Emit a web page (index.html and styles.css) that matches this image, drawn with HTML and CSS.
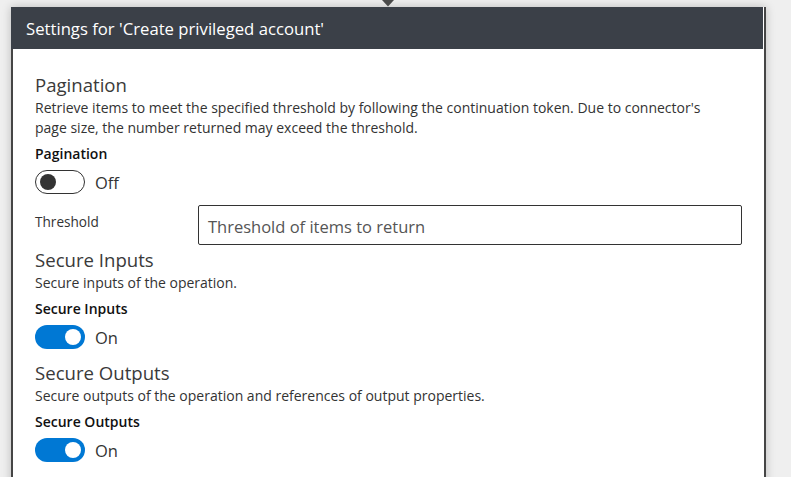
FILE: index.html
```html
<!DOCTYPE html>
<html>
<head>
<meta charset="utf-8">
<link rel="stylesheet" href="styles.css">
</head>
<body>
<div class="stage">
  <svg class="connector" width="14" height="8" viewBox="0 0 14 8"><path d="M1 0 L7 6.5 L13 0 Z" fill="#4a4a4a"/></svg>
  <div class="panel">
    <div class="header">Settings for 'Create privileged account'</div>
    <div class="content">
      <section class="section">
        <h2 class="heading">Pagination</h2>
        <p class="desc">Retrieve items to meet the specified threshold by following the continuation token. Due to connector's page size, the number returned may exceed the threshold.</p>
        <div class="label">Pagination</div>
        <div class="toggle-row">
          <span class="toggle off"><span class="knob"></span></span>
          <span class="state">Off</span>
        </div>
        <div class="field-row">
          <span class="field-label">Threshold</span>
          <div class="input">Threshold of items to return</div>
        </div>
      </section>
      <section class="section after-field">
        <h2 class="heading">Secure Inputs</h2>
        <p class="desc">Secure inputs of the operation.</p>
        <div class="label">Secure Inputs</div>
        <div class="toggle-row">
          <span class="toggle on"><span class="knob"></span></span>
          <span class="state">On</span>
        </div>
      </section>
      <section class="section after-toggle">
        <h2 class="heading">Secure Outputs</h2>
        <p class="desc">Secure outputs of the operation and references of output properties.</p>
        <div class="label">Secure Outputs</div>
        <div class="toggle-row">
          <span class="toggle on"><span class="knob"></span></span>
          <span class="state">On</span>
        </div>
      </section>
    </div>
  </div>
</div>
</body>
</html>
```
FILE: styles.css
```css
html, body {
  margin: 0;
  padding: 0;
  height: 100%;
  overflow: hidden;
  background: #efefef;
  font-family: "Open Sans", "Noto Sans", sans-serif;
}
.stage {
  position: relative;
  padding: 7px 0 0 11px;
  height: 100%;
  box-sizing: border-box;
}
.connector {
  position: absolute;
  left: 381px;
  top: 0;
}
.panel {
  width: 751px;
  height: 480px;
  background: #fff;
  border-left: 2px solid #454545;
  border-right: 2px solid #454545;
  box-shadow: 0 0 9px rgba(0,0,0,0.22);
}
.header {
  margin-left: -2px;
  margin-right: 1px;
  height: 42px;
  box-sizing: border-box;
  background: #3b4048;
  color: #fff;
  font-size: 16.7px;
  line-height: 43px;
  padding-left: 15px;
}
.content {
  padding: 23px 22px 0 22px;
}
.section {
  margin: 0;
}
.section.after-field {
  margin-top: 2px;
}
.section.after-toggle {
  margin-top: 11px;
}
.heading {
  margin: 0;
  font-weight: 400;
  font-size: 18.6px;
  line-height: 26px;
  color: #3a3a3a;
}
.desc {
  margin: 0;
  max-width: 690px;
  font-size: 14px;
  line-height: 20px;
  color: #333;
}
.label {
  margin-top: 6px;
  font-size: 14px;
  font-weight: 600;
  line-height: 20px;
  color: #111;
}
.toggle-row {
  margin-top: 6px;
  display: flex;
  align-items: center;
  gap: 10px;
  height: 24px;
}
.toggle {
  width: 50px;
  height: 24px;
  box-sizing: border-box;
  border-radius: 12px;
  display: flex;
  align-items: center;
  padding: 0 4px;
}
.toggle.off {
  border: 1px solid #333;
  background: #fff;
  justify-content: flex-start;
}
.toggle.on {
  background: #0078d4;
  justify-content: flex-end;
}
.knob {
  width: 16px;
  height: 16px;
  border-radius: 50%;
}
.toggle.off .knob { background: #333; }
.toggle.on .knob { background: #fff; }
.state {
  font-size: 16.5px;
  color: #333;
}
.field-row {
  margin-top: 11px;
  display: flex;
  align-items: flex-start;
}
.field-label {
  width: 163px;
  padding-top: 7px;
  font-size: 13.6px;
  line-height: 20px;
  color: #333;
}
.input {
  width: 544px;
  height: 40px;
  box-sizing: border-box;
  border: 1px solid #333;
  border-radius: 2px;
  padding: 2px 0 0 9px;
  font-size: 16.5px;
  line-height: 38px;
  color: #555;
}
```
